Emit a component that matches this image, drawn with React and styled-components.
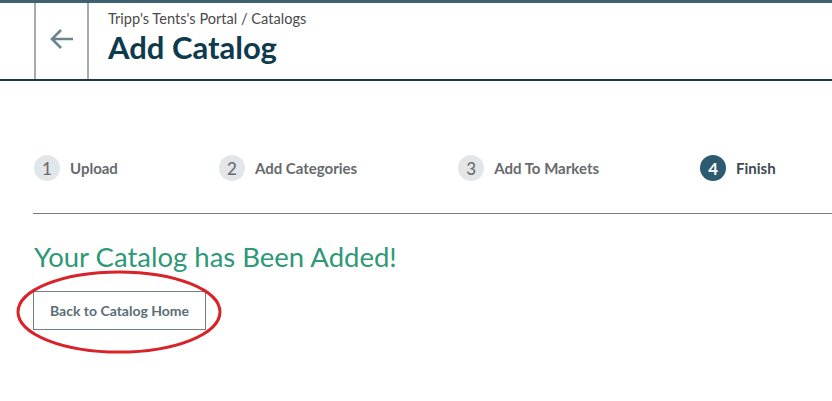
import React from 'react';
import styled, { createGlobalStyle } from 'styled-components';

const GlobalStyle = createGlobalStyle`
  body {
    margin: 0;
    background: #ffffff;
    font-family: Lato, "Open Sans", sans-serif;
  }
`;

const Page = styled.div`
  width: 832px;
  height: 401px;
  overflow: hidden;
  border-top: 3px solid #3c6272;
  box-sizing: border-box;
`;

const Header = styled.header`
  display: flex;
  height: 76px;
  border-bottom: 2px solid #1d3a47;
  padding-left: 34px;
`;

const BackCell = styled.div`
  width: 55px;
  border-left: 2px solid #a7abad;
  border-right: 2px solid #a7abad;
  display: flex;
  align-items: center;
  justify-content: center;
  padding-bottom: 4px;
  box-sizing: border-box;
`;

const TitleBlock = styled.div`
  padding: 7px 0 0 19px;
`;

const Crumb = styled.div`
  font-size: 14.6px;
  color: #4a4a4a;
  line-height: 18px;
`;

const Title = styled.h1`
  margin: 1px 0 0;
  font-size: 31px;
  font-weight: 700;
  color: #0e3a4e;
  line-height: 36px;
`;

const Content = styled.main`
  position: relative;
  padding: 65px 0 0 33px;
`;

const Steps = styled.ol`
  list-style: none;
  margin: 0;
  padding: 0 0 0 1px;
  display: flex;
  gap: 101px;
  height: 44px;
  align-items: center;
`;

const Step = styled.li`
  display: flex;
  align-items: center;
  gap: 10px;
  font-size: 15px;
  font-weight: 700;
  color: ${({ $active }) => ($active ? '#3d4a52' : '#666a6d')};
`;

const Num = styled.span`
  width: 26px;
  height: 26px;
  border-radius: 50%;
  display: flex;
  align-items: center;
  justify-content: center;
  font-size: 17px;
  font-weight: ${({ $active }) => ($active ? 700 : 500)};
  background: ${({ $active }) => ($active ? '#2c5a6e' : '#e3e6e9')};
  color: ${({ $active }) => ($active ? '#ffffff' : '#6a6d70')};
`;

const Rule = styled.hr`
  border: none;
  border-top: 1px solid #7a7a7a;
  margin: 23px 0 0;
`;

const Done = styled.h2`
  margin: 26px 0 0 1px;
  font-size: 27.5px;
  font-weight: 400;
  color: #2e9878;
  line-height: 34px;
`;

const HomeButton = styled.button`
  margin-top: 17px;
  width: 173px;
  height: 39px;
  background: #ffffff;
  border: 1px solid #6d7f87;
  font-family: inherit;
  font-size: 14px;
  font-weight: 700;
  color: #5a6e78;
  cursor: pointer;
`;

const Circle = styled.svg`
  position: absolute;
  left: 15px;
  top: 187px;
  pointer-events: none;
`;

const steps = ['Upload', 'Add Categories', 'Add To Markets', 'Finish'];

export default function App() {
  return (
    <Page>
      <GlobalStyle />
      <Header>
        <BackCell>
          <svg width="26" height="24" viewBox="0 0 26 24" fill="none">
            <path d="M24 12H3M12 3l-9 9 9 9" stroke="#6b8590" strokeWidth="2.6" />
          </svg>
        </BackCell>
        <TitleBlock>
          <Crumb>Tripp's Tents's Portal / Catalogs</Crumb>
          <Title>Add Catalog</Title>
        </TitleBlock>
      </Header>
      <Content>
        <Steps>
          {steps.map((s, i) => (
            <Step key={s} $active={i === 3}>
              <Num $active={i === 3}>{i + 1}</Num>
              {s}
            </Step>
          ))}
        </Steps>
        <Rule />
        <Done>Your Catalog has Been Added!</Done>
        <HomeButton>Back to Catalog Home</HomeButton>
        <Circle width="210" height="90" viewBox="0 0 210 90">
          <ellipse cx="104" cy="44" rx="101" ry="40" stroke="#d8232a" strokeWidth="3" fill="none" />
        </Circle>
      </Content>
    </Page>
  );
}
